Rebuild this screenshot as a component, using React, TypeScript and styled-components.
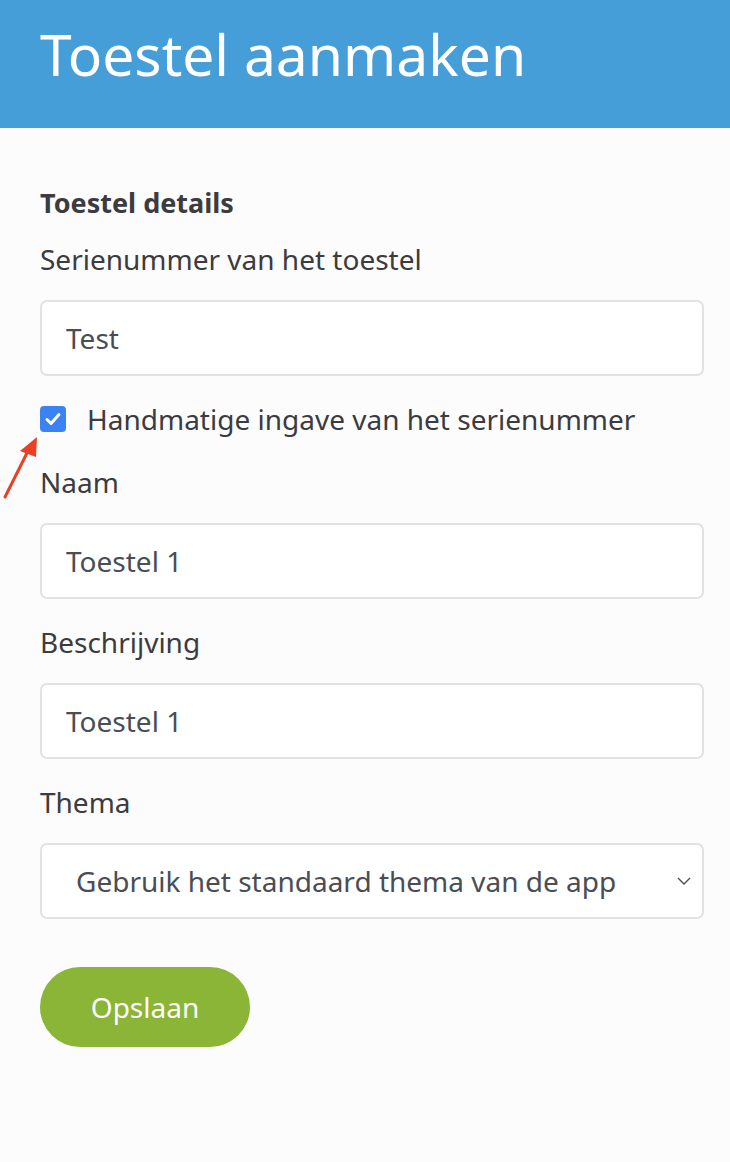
import styled, { createGlobalStyle } from 'styled-components';

const GlobalStyle = createGlobalStyle`
  html, body {
    margin: 0;
    padding: 0;
    background: #fcfcfc;
    font-family: 'Noto Sans', 'Open Sans', sans-serif;
    color: #3b3b40;
  }
  * { box-sizing: border-box; }
`;

const App = () => {
  return (
    <>
      <GlobalStyle />
      <Page>
        <Header>
          <Title>Toestel aanmaken</Title>
        </Header>
        <Form>
          <SectionTitle>Toestel details</SectionTitle>
          <Label>Serienummer van het toestel</Label>
          <Input defaultValue="Test" />
          <CheckRow>
            <CheckBox>
              <svg width="20" height="20" viewBox="0 0 20 20">
                <path d="M4 10.5l4 4L16 5.5" fill="none" stroke="#fff" strokeWidth="3" strokeLinecap="round" strokeLinejoin="round" />
              </svg>
            </CheckBox>
            <CheckLabel>Handmatige ingave van het serienummer</CheckLabel>
            <Arrow width="44" height="74" viewBox="0 0 44 74">
              <path d="M5 68L28 22" stroke="#ea4024" strokeWidth="3" strokeLinecap="round" />
              <path d="M37 8L20 22L36 28Z" fill="#ea4024" />
            </Arrow>
          </CheckRow>
          <Label $spaced={false}>Naam</Label>
          <Input defaultValue="Toestel 1" />
          <Label $spaced>Beschrijving</Label>
          <Input defaultValue="Toestel 1" />
          <Label $spaced>Thema</Label>
          <SelectBox>
            <span>Gebruik het standaard thema van de app</span>
            <svg width="16" height="10" viewBox="0 0 16 10">
              <path d="M2 2l6 6 6-6" fill="none" stroke="#4a4d55" strokeWidth="1.4" />
            </svg>
          </SelectBox>
          <SaveButton>Opslaan</SaveButton>
        </Form>
      </Page>
    </>
  );
};

export default App;

const Page = styled.div`
  min-height: 1162px;
  background: #fcfcfc;
`;

const Header = styled.header`
  height: 128px;
  background: #469ed9;
  padding: 20px 40px 0;
`;

const Title = styled.h1`
  margin: 0;
  color: #fff;
  font-size: 57px;
  font-weight: 400;
  line-height: 68px;
`;

const Form = styled.div`
  display: flex;
  flex-direction: column;
  align-items: flex-start;
  padding: 56px 26px 0 40px;
`;

const SectionTitle = styled.h2`
  margin: 0;
  font-size: 27px;
  font-weight: 700;
  line-height: 38px;
  color: #3b3b40;
`;

const Label = styled.label<{ $spaced?: boolean }>`
  display: block;
  margin-top: ${(p) => (p.$spaced === undefined ? '17px' : p.$spaced ? '23px' : '2px')};
  margin-bottom: 19px;
  font-size: 28px;
  line-height: 40px;
  color: #3b3b40;
`;

const Input = styled.input`
  width: 100%;
  height: 76px;
  margin-top: 2px;
  padding: 0 24px;
  border: 2px solid #e2e2e2;
  border-radius: 7px;
  background: #fff;
  font-family: inherit;
  font-size: 28px;
  color: #4a4d55;
  outline: none;
`;

const CheckRow = styled.div`
  position: relative;
  display: flex;
  align-items: center;
  gap: 21px;
  height: 40px;
  margin-top: 23px;
  margin-bottom: 21px;
`;

const CheckBox = styled.span`
  display: flex;
  align-items: center;
  justify-content: center;
  width: 26px;
  height: 26px;
  border-radius: 4px;
  background: #3b82f2;
`;

const CheckLabel = styled.span`
  font-size: 28px;
  color: #3b3b40;
`;

const Arrow = styled.svg`
  position: absolute;
  left: -40px;
  top: 30px;
`;

const SelectBox = styled.div`
  width: 100%;
  height: 76px;
  margin-top: 2px;
  padding: 0 10px 0 34px;
  display: flex;
  align-items: center;
  justify-content: space-between;
  border: 2px solid #e2e2e2;
  border-radius: 7px;
  background: #fff;
  font-size: 28px;
  color: #4a4d55;
`;

const SaveButton = styled.button`
  margin-top: 48px;
  width: 210px;
  height: 80px;
  border: none;
  border-radius: 40px;
  background: #8ab536;
  color: #fff;
  font-family: inherit;
  font-size: 28px;
`;
